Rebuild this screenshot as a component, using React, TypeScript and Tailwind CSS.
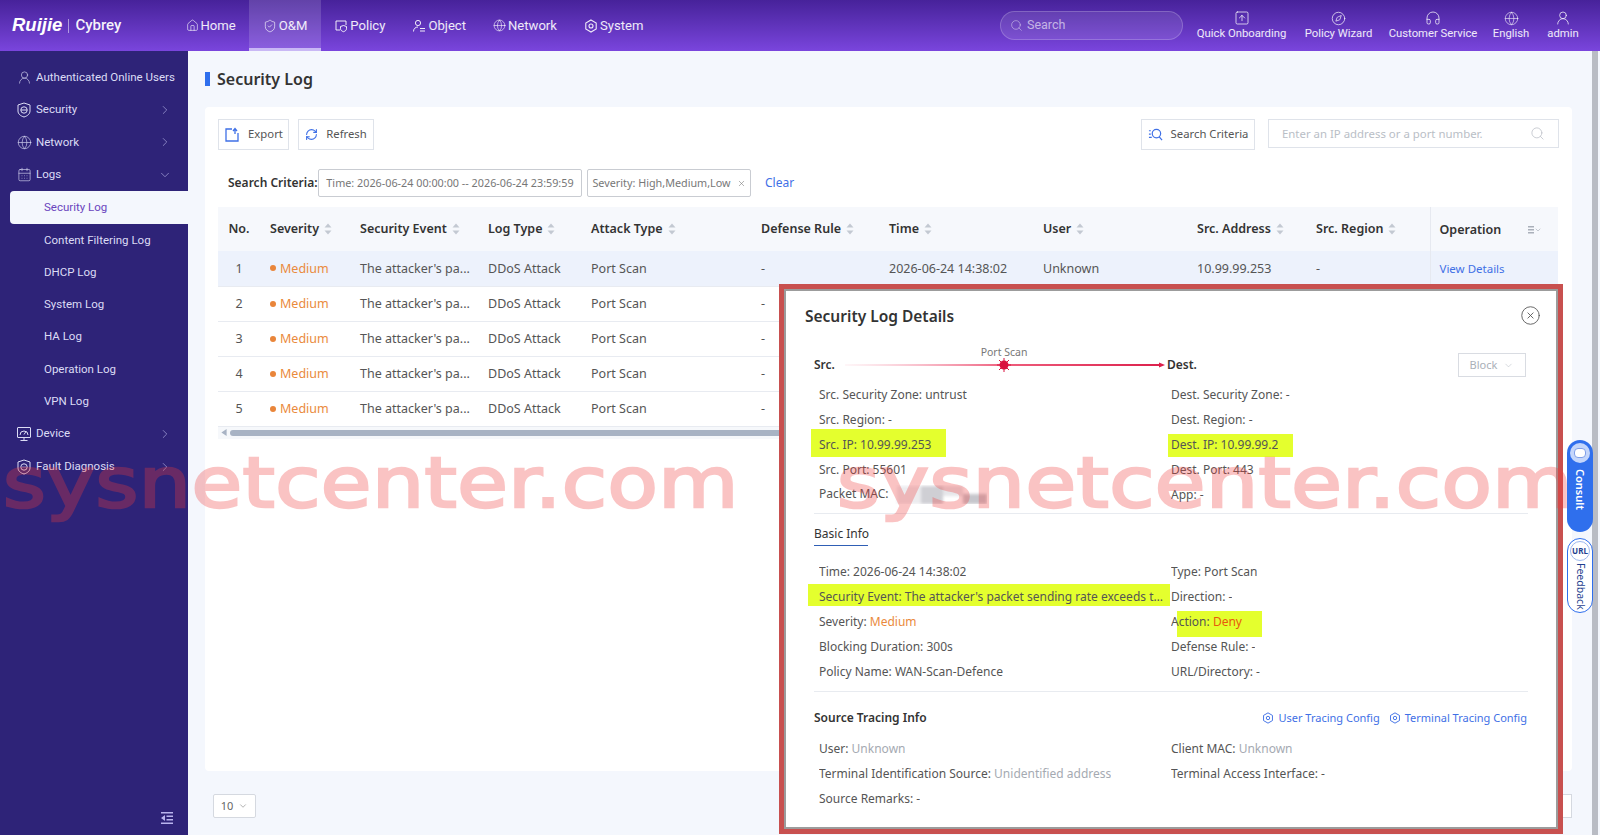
import { ReactNode } from 'react';
import {
  House, ShieldCheck, Globe, UserRound, ChevronRight, ChevronDown, Search, SquareArrowUp,
  Compass, Headphones, RefreshCw, CalendarDays, CircleX, X,
} from 'lucide-react';

function PolicyIcon() {
  return (
    <svg viewBox="0 0 14 14" className="h-[14px] w-[14px]" fill="none" stroke="currentColor" strokeWidth="1">
      <path d="M12 6V2H2v9h4" />
      <path d="M9.500 6.500l3 1v2.200c0 1.500-1.300 2.500-3 3-1.700-.5-3-1.500-3-3V7.500z" />
    </svg>
  );
}

function ObjectIcon() {
  return (
    <svg viewBox="0 0 14 14" className="h-[14px] w-[14px]" fill="none" stroke="currentColor" strokeWidth="1">
      <circle cx="6" cy="4" r="2.600" />
      <path d="M1.500 12.500c0-2.800 2-4.500 4.500-4.500" />
      <path d="M8 9.500h5M8 12h5" />
    </svg>
  );
}

function HexIcon({ className }: { className: string }) {
  return (
    <svg viewBox="0 0 14 14" className={className} fill="none" stroke="currentColor" strokeWidth="1.100">
      <path d="M7 1l5.200 3v6L7 13l-5.200-3V4z" />
      <circle cx="7" cy="7" r="2" />
    </svg>
  );
}

function ShieldGlobeIcon({ face }: { face?: boolean }) {
  return (
    <svg viewBox="0 0 16 16" className="h-[16px] w-[16px]" fill="none" stroke="currentColor" strokeWidth="1">
      <path d="M8 1l6 2v6c0 3-2.700 5-6 6-3.300-1-6-3-6-6V3z" />
      <circle cx="8" cy="8" r="3.200" />
      {face ? <path d="M7 7.500v1M9 7.500v1" /> : <path d="M4.800 8h6.400" />}
    </svg>
  );
}

function DeviceIcon() {
  return (
    <svg viewBox="0 0 16 16" className="h-[16px] w-[16px]" fill="none" stroke="currentColor" strokeWidth="1">
      <rect x="1.500" y="1.500" width="13" height="10" rx="0.500" />
      <path d="M8 11.500v3M4.500 14.500h7" />
      <path d="M4 9a4 4 0 0 1 8 0M8 8.500l2-3" />
    </svg>
  );
}

function SortIcon() {
  return (
    <svg viewBox="0 0 8 12" className="ml-[5px] h-[12px] w-[8px] shrink-0" fill="#c3c9d2">
      <path d="M4 0.500L7.500 4.500H0.500z" />
      <path d="M4 11.500L0.500 7.500H7.500z" />
    </svg>
  );
}

function NavItem({ icon, label, active }: { icon: ReactNode; label: string; active?: boolean }) {
  return (
    <div
      className={`flex h-full items-center gap-[2px] px-[13.500px] text-[13.100px] text-white/90 ${
        active ? 'border-b-[3px] border-[#c9b8f5] bg-white/15 pt-[3px]' : ''
      }`}
    >
      {icon}
      <span>{label}</span>
    </div>
  );
}

function TopAction({ icon, label, className }: { icon: ReactNode; label: string; className: string }) {
  return (
    <div className={`flex flex-col items-center pt-[10px] text-[11.300px] leading-[16px] text-white/90 ${className}`}>
      <div className="flex h-[16px] items-center">{icon}</div>
      <span className="whitespace-nowrap">{label}</span>
    </div>
  );
}

function SideItem({ icon, label, open }: { icon: ReactNode; label: string; open?: boolean }) {
  return (
    <div className="flex h-[32.500px] items-center pl-[16px] pr-[16px] text-[11.500px] text-[#dcdcf5]">
      <span className="mr-[4px] flex w-[16px] shrink-0 justify-center">{icon}</span>
      <span className="flex-1 whitespace-nowrap">{label}</span>
      {open === undefined ? null : open ? (
        <ChevronDown className="h-[14px] w-[14px] text-[#a9a6dc]" strokeWidth={1.200} />
      ) : (
        <ChevronRight className="h-[14px] w-[14px] text-[#a9a6dc]" strokeWidth={1.200} />
      )}
    </div>
  );
}

function SubItem({ label, active }: { label: string; active?: boolean }) {
  return active ? (
    <div className="ml-[10px] flex h-[33px] items-center rounded-l-[4px] bg-[#f4f7fd] pl-[34px] text-[11.500px] text-[#6a45bd]">
      {label}
    </div>
  ) : (
    <div className="flex h-[32.300px] items-center pl-[44px] text-[11.500px] text-[#dcdcf5]">{label}</div>
  );
}

function OutlineButton({ icon, label, className }: { icon: ReactNode; label: string; className: string }) {
  return (
    <div
      className={`flex h-[31px] items-center justify-center gap-[8px] border border-[#dfe3ea] bg-white text-[11.300px] text-[#555] ${className}`}
    >
      {icon}
      <span>{label}</span>
    </div>
  );
}

function Field({ children, mark }: { children: ReactNode; mark?: string }) {
  return (
    <div className="relative flex h-[25px] items-center whitespace-nowrap text-[12px] text-[#555]">
      {mark && <span className={`absolute bg-[#e4ff2e] ${mark}`} />}
      <span className="relative max-w-[348px] truncate">{children}</span>
    </div>
  );
}

const COLUMNS = [
  { label: 'Severity', w: 'w-[90px]' },
  { label: 'Security Event', w: 'w-[128px]' },
  { label: 'Log Type', w: 'w-[103px]' },
  { label: 'Attack Type', w: 'w-[170px]' },
  { label: 'Defense Rule', w: 'w-[128px]' },
  { label: 'Time', w: 'w-[154px]' },
  { label: 'User', w: 'w-[154px]' },
  { label: 'Src. Address', w: 'w-[119px]' },
  { label: 'Src. Region', w: 'w-[124px]' },
];

function LogTable() {
  return (
    <table className="w-[1340px] table-fixed border-collapse text-[12.500px] text-[#555]">
      <thead>
        <tr className="h-[44px] bg-[#f6f8fc] text-left text-[12.500px] font-semibold text-[#333]">
          <th className="w-[42px] text-center font-semibold">No.</th>
          {COLUMNS.map((c) => (
            <th key={c.label} className={`${c.w} pl-[10px] font-semibold`}>
              <span className="flex items-center whitespace-nowrap">
                {c.label}
                <SortIcon />
              </span>
            </th>
          ))}
          <th className="border-l border-[#e6e9f0] pl-[9px] pt-[2px] font-semibold">
            <span className="flex items-center justify-between pr-[16px]">
              Operation
              <span className="flex items-center text-[#aab0ba]">
                <svg viewBox="0 0 6 8" className="h-[8px] w-[6px]" fill="currentColor">
                  <path d="M0 0h6v1.500H0zM0 3h6v1.500H0zM0 6h6v1.500H0z" />
                </svg>
                <ChevronDown className="h-[8px] w-[8px]" strokeWidth={2} />
              </span>
            </span>
          </th>
        </tr>
      </thead>
      <tbody>
        {[1, 2, 3, 4, 5].map((n) => (
          <tr key={n} className={`h-[35px] border-b border-[#e8ebf1] [&>td]:pt-[2px] ${n === 1 ? 'bg-[#edf2fc]' : 'bg-white'}`}>
            <td className="text-center">{n}</td>
            <td className="pl-[10px] text-[#ea8a3c]">
              <span className="mr-[4px] inline-block h-[6px] w-[6px] rounded-full bg-[#e9853a] align-[1.500px]" />
              Medium
            </td>
            <td className="pl-[10px] whitespace-nowrap">The attacker's pa...</td>
            <td className="pl-[10px]">DDoS Attack</td>
            <td className="pl-[10px]">Port Scan</td>
            <td className="pl-[10px]">-</td>
            <td className="pl-[10px] whitespace-nowrap">2026-06-24 14:38:02</td>
            <td className="pl-[10px]">Unknown</td>
            <td className="pl-[10px]">10.99.99.253</td>
            <td className="pl-[10px]">-</td>
            <td className="border-l border-[#e6e9f0] pl-[9px] pt-0! text-[11.500px] text-[#3f70e6]">View Details</td>
          </tr>
        ))}
      </tbody>
    </table>
  );
}

function DetailsModal() {
  return (
    <div className="absolute left-[779px] top-[284px] z-10 border-[5px] border-[#c8504f]">
      <div className="h-[540px] w-[774px] bg-white pt-[16px] shadow-[inset_0_0_0_2px_#9c9c9c]">
        <div className="flex h-[24px] items-center justify-between pl-[21px] pr-[17px]">
          <span className="text-[15.500px] font-semibold text-[#333]">Security Log Details</span>
          <CircleX className="-mt-[4px] h-[21px] w-[21px] text-[#555]" strokeWidth={1} />
        </div>

        <div className="relative mt-[24px] flex h-[24px] items-center justify-between pl-[30px] pr-[32px]">
          <div className="flex items-center text-[12px] font-semibold text-[#333]">
            <span className="w-[31px]">Src.</span>
            <span className="relative h-[20px] w-[320px]">
              <span className="absolute -top-[10px] left-[134px] w-[50px] text-center text-[10.500px] font-normal text-[#777]">Port Scan</span>
              <svg viewBox="0 0 320 20" className="h-[20px] w-[320px]">
                <defs>
                  <linearGradient id="attackLine" gradientUnits="userSpaceOnUse" x1="0" x2="320" y1="10" y2="10">
                    <stop offset="0" stopColor="#f7a6b8" stopOpacity="0.100" />
                    <stop offset="0.500" stopColor="#ee5d7c" />
                    <stop offset="1" stopColor="#dc1f4b" />
                  </linearGradient>
                </defs>
                <path d="M0 10h316" stroke="url(#attackLine)" strokeWidth="2" fill="none" />
                <path d="M314 7.500l6 2.500-6 2.500z" fill="#dc1f4b" />
                <circle cx="159" cy="10" r="4.500" fill="#d9133f" />
                <path d="M159 3v14M152 10h14M154 5l10 10M164 5l-10 10" stroke="#d9133f" strokeWidth="1" />
              </svg>
            </span>
            <span className="ml-[2px]">Dest.</span>
          </div>
          <div className="flex h-[24px] w-[68px] items-center justify-center gap-[6px] border border-[#d9dce2] text-[11px] text-[#aab0b8]">
            Block
            <ChevronDown className="h-[11px] w-[11px]" strokeWidth={1} />
          </div>
        </div>

        <div className="mt-[5px] grid grid-cols-[352px_1fr] pl-[35px]">
          <Field>Src. Security Zone: untrust</Field>
          <Field>Dest. Security Zone: -</Field>
          <Field>Src. Region: -</Field>
          <Field>Dest. Region: -</Field>
          <Field mark="-left-[8px] -top-[3px] h-[28px] w-[135px]">Src. IP: 10.99.99.253</Field>
          <Field mark="-left-[3px] top-[2px] h-[23px] w-[125px]">Dest. IP: 10.99.99.2</Field>
          <Field>Src. Port: 55601</Field>
          <Field>Dest. Port: 443</Field>
          <Field>
            Packet MAC:
            <span className="ml-[8px] inline-flex h-[18px] w-[90px] align-middle blur-[1.500px]">
              <span className="h-full w-[24px] bg-[#ececef]" />
              <span className="h-full w-[22px] bg-[#cfcfd4]" />
              <span className="h-[10px] w-[20px] bg-[#e6e6ea]" />
              <span className="mt-[8px] h-[10px] w-[24px] bg-[#c6c6cc]" />
            </span>
          </Field>
          <Field>App: -</Field>
        </div>

        <div className="mx-[30px] mt-[6px] border-t border-[#e8ebf0]" />
        <div className="ml-[30px] mt-[10px] w-[54px] whitespace-nowrap border-b border-[#2f5fb5] pb-[1px] text-[12px] leading-[20px] text-[#333]">
          Basic Info
        </div>

        <div className="mt-[13px] grid grid-cols-[352px_1fr] pl-[35px]">
          <Field>Time: 2026-06-24 14:38:02</Field>
          <Field>Type: Port Scan</Field>
          <Field mark="-left-[11px] top-0 h-[22px] w-[362px]">
            Security Event: The attacker's packet sending rate exceeds the threshold
          </Field>
          <Field>Direction: -</Field>
          <Field>
            Severity: <span className="text-[#ea8a3c]">Medium</span>
          </Field>
          <Field mark="left-[6px] top-[2px] h-[26px] w-[85px]">
            Action: <span className="text-[#e8590c]">Deny</span>
          </Field>
          <Field>Blocking Duration: 300s</Field>
          <Field>Defense Rule: -</Field>
          <Field>Policy Name: WAN-Scan-Defence</Field>
          <Field>URL/Directory: -</Field>
        </div>

        <div className="mx-[30px] mt-[7px] border-t border-[#e8ebf0]" />
        <div className="mt-[16px] flex h-[20px] items-center justify-between pl-[30px] pr-[31px]">
          <span className="text-[12px] font-semibold text-[#333]">Source Tracing Info</span>
          <div className="flex items-center gap-[9px] text-[11px] text-[#3f70e6]">
            <span className="flex items-center gap-[4px]">
              <HexIcon className="h-[12px] w-[12px]" />
              User Tracing Config
            </span>
            <span className="flex items-center gap-[4px]">
              <HexIcon className="h-[12px] w-[12px]" />
              Terminal Tracing Config
            </span>
          </div>
        </div>

        <div className="mt-[8px] grid grid-cols-[352px_1fr] pl-[35px]">
          <Field>
            User: <span className="text-[#a5aab2]">Unknown</span>
          </Field>
          <Field>
            Client MAC: <span className="text-[#a5aab2]">Unknown</span>
          </Field>
          <Field>
            Terminal Identification Source: <span className="text-[#a5aab2]">Unidentified address</span>
          </Field>
          <Field>Terminal Access Interface: -</Field>
          <Field>Source Remarks: -</Field>
        </div>
      </div>
    </div>
  );
}

export default function App() {
  return (
    <div className="relative flex h-[835px] w-full flex-col overflow-hidden bg-[#f4f7fd] font-['Noto_Sans',sans-serif]">
      {/* Header */}
      <header className="flex h-[51px] shrink-0 items-center bg-gradient-to-b from-[#47229a] to-[#7a45dd] font-['Roboto',sans-serif]">
        <div className="flex w-[172px] shrink-0 items-center pl-[12px] text-white">
          <span className="font-['Liberation_Sans',sans-serif] text-[18.500px] font-bold italic leading-none">Ruijie</span>
          <span className="mx-[6px] h-[14px] w-px bg-white/50" />
          <span className="text-[15px] font-medium leading-none text-white/95">Cybrey</span>
        </div>
        <nav className="flex h-full">
          <NavItem icon={<House className="h-[13px] w-[13px]" strokeWidth={1.200} />} label="Home" />
          <NavItem icon={<ShieldCheck className="h-[14px] w-[14px]" strokeWidth={1.200} />} label="O&M" active />
          <NavItem icon={<PolicyIcon />} label="Policy" />
          <NavItem icon={<ObjectIcon />} label="Object" />
          <NavItem icon={<Globe className="h-[13px] w-[13px]" strokeWidth={1.200} />} label="Network" />
          <NavItem icon={<HexIcon className="h-[14px] w-[14px]" />} label="System" />
        </nav>
        <div className="ml-auto flex h-full items-start">
          <div className="mr-[4px] mt-[11px] flex h-[29px] w-[183px] items-center gap-[4px] rounded-full border border-white/20 bg-white/10 pl-[9px] text-[12.500px] text-white/60">
            <Search className="h-[13px] w-[13px]" strokeWidth={1.200} />
            Search
          </div>
          <TopAction className="w-[109px]" icon={<SquareArrowUp className="h-[16px] w-[16px]" strokeWidth={1.200} />} label="Quick Onboarding" />
          <TopAction className="w-[85px]" icon={<Compass className="h-[15px] w-[15px]" strokeWidth={1.200} />} label="Policy Wizard" />
          <TopAction className="w-[104px]" icon={<Headphones className="h-[16px] w-[16px]" strokeWidth={1.200} />} label="Customer Service" />
          <TopAction className="w-[52px]" icon={<Globe className="h-[15px] w-[15px]" strokeWidth={1} />} label="English" />
          <TopAction className="w-[52px]" icon={<UserRound className="h-[16px] w-[16px]" strokeWidth={1.200} />} label="admin" />
          <span className="w-[11px]" />
        </div>
      </header>

      <div className="flex min-h-0 flex-1">
        {/* Sidebar */}
        <aside className="relative w-[188px] shrink-0 bg-[#2e2378] pt-[10px] font-['Roboto',sans-serif]">
          <SideItem icon={<UserRound className="h-[15px] w-[15px]" strokeWidth={1} />} label="Authenticated Online Users" />
          <SideItem icon={<ShieldGlobeIcon />} label="Security" open={false} />
          <SideItem icon={<Globe className="h-[15px] w-[15px]" strokeWidth={1} />} label="Network" open={false} />
          <SideItem icon={<CalendarDays className="h-[15px] w-[15px]" strokeWidth={1} />} label="Logs" open />
          <SubItem label="Security Log" active />
          <SubItem label="Content Filtering Log" />
          <SubItem label="DHCP Log" />
          <SubItem label="System Log" />
          <SubItem label="HA Log" />
          <SubItem label="Operation Log" />
          <SubItem label="VPN Log" />
          <SideItem icon={<DeviceIcon />} label="Device" open={false} />
          <SideItem icon={<ShieldGlobeIcon face />} label="Fault Diagnosis" open={false} />
          <svg viewBox="0 0 12 12" className="absolute bottom-[11px] right-[15px] h-[12px] w-[12px]" fill="#b9b4ee">
            <path d="M0 0h12v1.500H0zM0 10.500h12V12H0zM5.500 3.500H12V5H5.500zM5.500 7H12v1.500H5.500zM4 3v6L0 6z" />
          </svg>
        </aside>

        {/* Main */}
        <main className="min-w-0 flex-1 pl-[17px]">
          <div className="flex h-[56px] items-center">
            <span className="mr-[7px] h-[14px] w-[5px] bg-[#2f6fed]" />
            <h1 className="text-[16px] font-semibold text-[#333]">Security Log</h1>
          </div>

          <section className="h-[664px] w-[1367px] rounded-[4px] bg-white pl-[13px] pt-[12px]">
            <div className="flex w-[1341px] items-start">
              <OutlineButton className="w-[71px]" icon={
                <svg viewBox="0 0 16 16" className="h-[16px] w-[16px]" fill="none" stroke="#3f70e6" strokeWidth="1.300">
                  <path d="M8 2H2v12h12V6" />
                  <path d="M11 7V2M9 4l2-2.500L13 4" />
                </svg>
              } label="Export" />
              <OutlineButton className="ml-[9px] w-[76px]" icon={<RefreshCw className="h-[13px] w-[13px] text-[#3f70e6]" strokeWidth={2} />} label="Refresh" />
              <OutlineButton className="ml-auto w-[114px]" icon={
                <svg viewBox="0 0 16 16" className="h-[15px] w-[15px]" fill="none" stroke="#3f70e6" strokeWidth="1.300">
                  <circle cx="9" cy="7" r="4.500" />
                  <path d="M12 10.500l3 3.500M1 4h2M1 7.500h2M1 11h3" />
                </svg>
              } label="Search Criteria" />
              <div className="ml-[13px] flex h-[29px] w-[291px] items-center justify-between border border-[#dfe3ea] pl-[13px] pr-[13px] text-[11.400px] text-[#b9bec6]">
                Enter an IP address or a port number.
                <Search className="h-[15px] w-[15px] text-[#b9bec6]" strokeWidth={1.200} />
              </div>
            </div>

            <div className="mt-[19px] flex h-[28px] items-center text-[12px]">
              <span className="ml-[10px] w-[90px] font-semibold text-[#333]">Search Criteria:</span>
              <span className="flex h-[28px] w-[264px] items-center justify-center rounded-[2px] border border-[#c9ccd2] text-[10.800px] text-[#777]">
                Time: 2026-06-24 00:00:00 -- 2026-06-24 23:59:59
              </span>
              <span className="ml-[5px] flex h-[28px] w-[164px] items-center justify-center gap-[6px] rounded-[2px] border border-[#c9ccd2] text-[10.800px] text-[#777]">
                Severity: High,Medium,Low
                <X className="h-[9px] w-[9px]" strokeWidth={1.500} />
              </span>
              <span className="ml-[14px] text-[#3f70e6]">Clear</span>
            </div>

            <div className="mt-[10px]">
              <LogTable />
              <div className="flex h-[12px] w-[1340px] items-center bg-[#f6f8fb] pl-[3px]">
                <svg viewBox="0 0 6 8" className="h-[7px] w-[6px]" fill="#a8b3c4">
                  <path d="M6 0v8L0 4z" />
                </svg>
                <span className="ml-[3px] h-[6px] w-[1000px] rounded-full bg-[#a8b3c4]" />
              </div>
            </div>
          </section>

          <div className="mt-[23px] flex w-[1367px] justify-between pl-[8px]">
            <div className="flex h-[24px] w-[43px] items-center justify-center gap-[5px] rounded-[2px] border border-[#d5d9e0] bg-white text-[11px] text-[#666]">
              10
              <ChevronDown className="h-[10px] w-[10px]" strokeWidth={1.200} />
            </div>
            <span className="h-[24px] w-[40px] border border-[#d5d9e0] bg-white" />
          </div>
        </main>
        <div className="w-[6px] shrink-0 bg-[#b9bcc4]" />
        <div className="w-[2px] shrink-0 bg-[#f4f7fd]" />
      </div>

      <DetailsModal />

      {/* Floating tabs */}
      <div className="absolute left-[1567px] top-[440px] z-20 flex h-[92px] w-[26px] flex-col items-center rounded-full bg-[#2f6fed] pt-[3px]">
        <span className="flex h-[20px] w-[20px] items-center justify-center rounded-full bg-[#c4d6fb]">
          <span className="h-[10px] w-[12px] rounded-[4px] border border-[#7f9fe8] bg-white" />
        </span>
        <span className="mt-[6px] text-[11px] font-semibold text-white [writing-mode:vertical-rl]">Consult</span>
      </div>
      <div className="absolute left-[1567px] top-[538px] z-20 flex h-[75px] w-[26px] flex-col items-center rounded-full border border-[#2f6fed] bg-white pt-[2px]">
        <span className="flex h-[20px] w-[20px] items-center justify-center rounded-full border border-[#9db8ee] text-[8px] font-bold text-[#1f3f8f]">URL</span>
        <span className="mt-[2px] text-[10.500px] text-[#1f3f8f] [writing-mode:vertical-rl]">Feedback</span>
      </div>

      {/* Watermark */}
      <span className="pointer-events-none absolute left-[3px] top-[441px] z-30 origin-left scale-x-[1.175] whitespace-nowrap font-['DejaVu_Sans',sans-serif] text-[70px] leading-[84px] tracking-[0.400px] text-[#f03c3c] opacity-30 [-webkit-text-stroke:2.500px_#f03c3c]">
        sysnetcenter.com
      </span>
      <span className="pointer-events-none absolute left-[837px] top-[441px] z-30 origin-left scale-x-[1.175] whitespace-nowrap font-['DejaVu_Sans',sans-serif] text-[70px] leading-[84px] tracking-[0.400px] text-[#f03c3c] opacity-30 [-webkit-text-stroke:2.500px_#f03c3c]">
        sysnetcenter.com
      </span>
    </div>
  );
}
